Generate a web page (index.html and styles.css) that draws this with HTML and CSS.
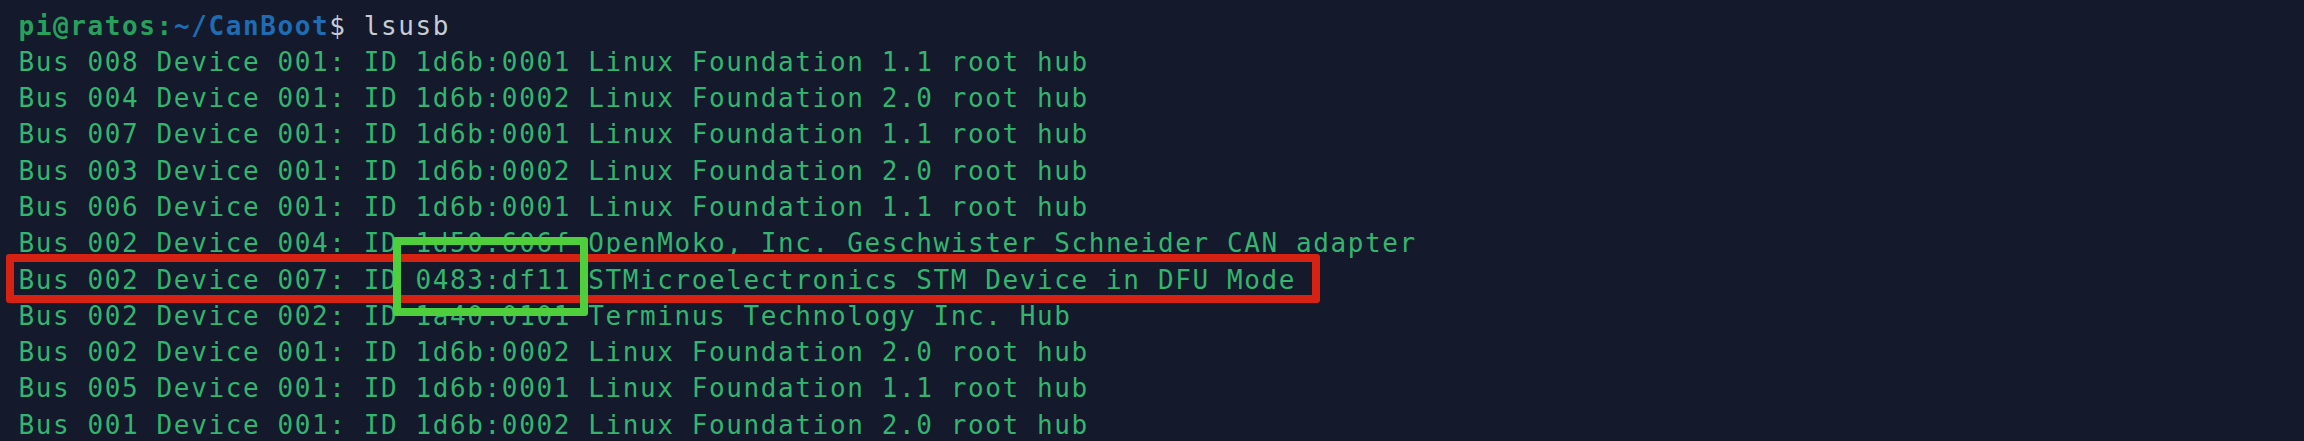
FILE: index.html
```html
<!DOCTYPE html>
<html lang="en">
<head>
    <meta charset="UTF-8">
    <title>lsusb</title>
    <link rel="stylesheet" href="styles.css">
</head>
<body>

    <div class="terminal">
        <div class="line"><span class="user">pi@ratos:</span><span class="path">~/CanBoot</span><span class="cmd">$ lsusb</span></div>
        <div class="line">Bus 008 Device 001: ID 1d6b:0001 Linux Foundation 1.1 root hub</div>
        <div class="line">Bus 004 Device 001: ID 1d6b:0002 Linux Foundation 2.0 root hub</div>
        <div class="line">Bus 007 Device 001: ID 1d6b:0001 Linux Foundation 1.1 root hub</div>
        <div class="line">Bus 003 Device 001: ID 1d6b:0002 Linux Foundation 2.0 root hub</div>
        <div class="line">Bus 006 Device 001: ID 1d6b:0001 Linux Foundation 1.1 root hub</div>
        <div class="line">Bus 002 Device 004: ID 1d50:606f OpenMoko, Inc. Geschwister Schneider CAN adapter</div>
        <div class="line">Bus 002 Device 007: ID 0483:df11 STMicroelectronics STM Device in DFU Mode</div>
        <div class="line">Bus 002 Device 002: ID 1a40:0101 Terminus Technology Inc. Hub</div>
        <div class="line">Bus 002 Device 001: ID 1d6b:0002 Linux Foundation 2.0 root hub</div>
        <div class="line">Bus 005 Device 001: ID 1d6b:0001 Linux Foundation 1.1 root hub</div>
        <div class="line">Bus 001 Device 001: ID 1d6b:0002 Linux Foundation 2.0 root hub</div>

        <!-- annotation boxes drawn over the output -->
        <div class="mark mark-row"></div>
        <div class="mark mark-id"></div>
    </div>

</body>
</html>
```

FILE: styles.css
```css
html, body {
    margin: 0;
    height: 100%;
    background: #141a2b;
    overflow: hidden;
}

.terminal {
    position: relative;
    padding: 7.5px 0 0 18.5px;
    font-family: 'DejaVu Sans Mono', 'Liberation Mono', monospace;
    font-size: 26px;
    letter-spacing: 1.61px;
    line-height: 36.3px;
    color: #33b56f;
}

.line {
    white-space: pre;
}

.user {
    font-weight: bold;
    color: #28a05d;
}

.path {
    font-weight: bold;
    color: #1d6cb4;
}

.cmd {
    color: #c6cbd4;
}

/* boxes drawn over the output */
.mark {
    position: absolute;
    box-sizing: border-box;
    border-radius: 3px;
}

.mark-row {
    left: 6px;
    top: 254px;
    width: 1314px;
    height: 49px;
    border: 8px solid #d52213;
}

.mark-id {
    left: 393px;
    top: 237px;
    width: 195px;
    height: 79px;
    border: 8px solid #4fcf3c;
}
```
